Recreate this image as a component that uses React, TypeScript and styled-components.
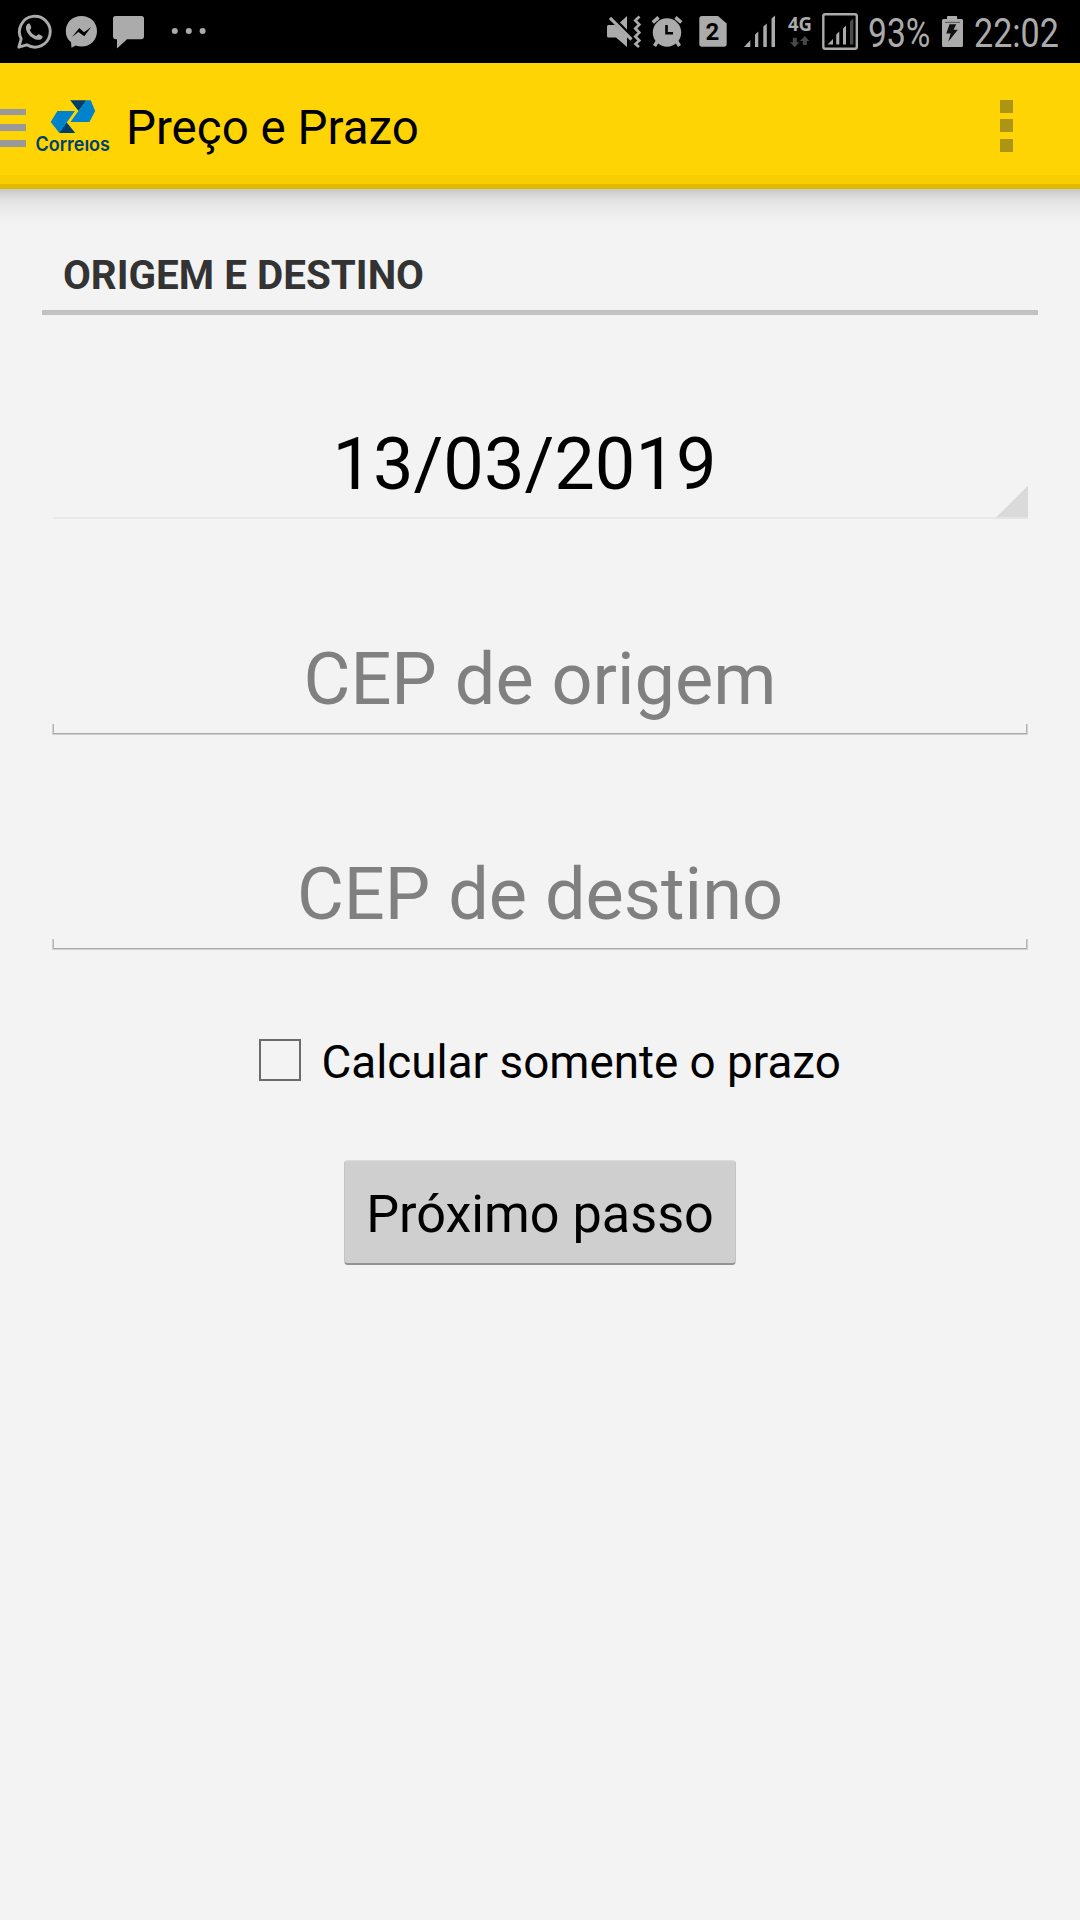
import React from "react";
import styled, { createGlobalStyle } from "styled-components";

const GlobalStyle = createGlobalStyle`
  * { box-sizing: border-box; }
  body { margin: 0; background: #f3f3f3; font-family: Roboto, "Liberation Sans", sans-serif; }
  svg { display: block; flex: none; overflow: visible; }
`;

const Screen = styled.div`
  width: 1080px;
  height: 1920px;
  display: flex;
  flex-direction: column;
  background: #f3f3f3;
  color: #000;
  overflow: hidden;
`;

const StatusBar = styled.header`
  height: 63px;
  flex: none;
  display: flex;
  justify-content: space-between;
  background: #000;
  color: #ababab;
`;

const StatusGroup = styled.div`
  display: flex;
`;

const StatusText = styled.div<{ $width: number; $scale: number; $gap: number }>`
  width: ${(p) => p.$width}px;
  margin-left: ${(p) => p.$gap}px;
  font-size: 40px;
  line-height: 67px;
  white-space: nowrap;
  transform: scaleX(${(p) => p.$scale});
  transform-origin: left center;
`;

const AppBar = styled.nav`
  height: 126px;
  flex: none;
  display: flex;
  align-items: flex-start;
  background: linear-gradient(#ffd405 112px, #f9ce00 112px, #f9ce00 121px, #dfb900 121px);
`;

const MenuIcon = styled.div`
  width: 26px;
  margin-top: 45.6px;
  display: flex;
  flex-direction: column;
  gap: 9px;
`;

const MenuLine = styled.span`
  height: 6.7px;
  background: #999;
`;

const LogoBox = styled.div`
  margin: 32px 0 0 7px;
`;

const Title = styled.h1`
  flex: 1;
  margin: 0 0 0 12px;
  font-size: 47.5px;
  font-weight: 400;
  line-height: 130px;
  white-space: nowrap;
`;

const Overflow = styled.button`
  margin: 37px 67px 0 0;
  padding: 0;
  border: 0;
  background: none;
  display: flex;
  flex-direction: column;
  gap: 6.4px;
`;

const OverflowDot = styled.span`
  width: 13px;
  height: 13px;
  background: #ad9415;
`;

const Shadow = styled.div`
  height: 37px;
  flex: none;
  background: linear-gradient(#c6c6c6, #d2d2d2 4px, #e2e2e2 11px, #ececec 22px, #f3f3f3);
`;

const Form = styled.main`
  padding: 0 42px;
  display: flex;
  flex-direction: column;
`;

const SectionTitle = styled.h2`
  height: 89px;
  margin: 0;
  padding: 26px 21px 0;
  border-bottom: 5px solid #c2c2c2;
  font-size: 40.4px;
  font-weight: 700;
  line-height: 48px;
  color: #333;
`;

const Spinner = styled.div`
  height: 110px;
  margin: 95px 10px 0 11px;
  display: flex;
  align-items: flex-end;
`;

const SpinnerValue = styled.div`
  flex: 1;
  height: 109px;
  margin-bottom: 1px;
  border-bottom: 2px solid #e8e8e8;
  font-size: 72.2px;
  line-height: 109px;
  text-align: center;
`;

const SpinnerCorner = styled.div`
  width: 32px;
  height: 33px;
  margin-bottom: 1px;
  border-bottom: 2px solid #e4e4e4;
  background: linear-gradient(135deg, transparent 50%, #dadada 50%);
`;

const Field = styled.div`
  height: 110px;
  margin: 105px 10px 0;
  font-size: 72.1px;
  line-height: 109px;
  text-align: center;
  color: #808080;
  display: flex;
  flex-direction: column;
`;

const Bracket = styled.span`
  height: 11px;
  margin-top: -10px;
  border: 1px solid #d0d0d0;
  border-top: 0;
  box-shadow: inset 1px 0 #b4b4b4, inset -1px 0 #b4b4b4, inset 0 -1px #a9a9a9;
`;

const CheckRow = styled.label`
  height: 60px;
  margin: 80px 0 0 217px;
  display: flex;
`;

const CheckBox = styled.span`
  width: 42px;
  height: 42px;
  margin-top: 9px;
  border: 2px solid #6a6a6a;
`;

const CheckLabel = styled.span`
  margin-left: 20.5px;
  font-size: 45.8px;
  line-height: 66px;
  white-space: nowrap;
`;

const NextButton = styled.button`
  align-self: center;
  width: 392px;
  height: 105px;
  margin-top: 70px;
  padding: 6px 0 0;
  border: 1px solid #c4c4c4;
  border-top-color: #dcdcdc;
  border-bottom: 2px solid #929292;
  border-radius: 4px;
  background: #cfcfcf;
  color: #000;
  font: 400 52.2px/96px Roboto, sans-serif;
`;

const LeftIcons = () => (
  <svg width="220" height="63" viewBox="0 0 220 63" fill="#ababab">
    <path d="M18.8 47.2 L21.2 38.8 A15.4 15.4 0 1 1 26.8 44.8 Z" fill="none" stroke="#ababab" strokeWidth="2.9" strokeLinejoin="round" />
    <path d="M27.2 24.2 C28.4 22.9 29.8 23.4 30.2 24.5 L31.2 27.2 C31.6 28.3 30.2 29.5 29.8 30.1 C30.9 33 33.3 35.1 36.2 36.1 C37.2 35.4 38 34 38.9 34.3 L42.2 36 C43.2 36.6 42.2 38.7 40.8 39.4 C36.6 41 31.7 37.9 29.2 35 C26.4 31.8 24.6 27.4 27.2 24.2 Z" />
    <path fillRule="evenodd" d="M81.4 16 C90.5 16 97 22.6 97 31.2 C97 39.8 90.5 46.6 81.4 46.6 C79.3 46.6 77.5 46.3 75.8 45.6 L71.5 47.8 L71 42.2 C67.5 39.5 65.8 35.6 65.8 31.2 C65.8 22.6 72.3 16 81.4 16 Z M72 37 L79.3 28 L84 32.2 L91.2 27 L84.3 36.3 L78.4 32.1 Z" />
    <path d="M115.5 16 H141.5 Q144 16 144 18.5 V36.8 Q144 39.2 141.5 39.2 H127 L117 48.5 V39.2 H115.5 Q113 39.2 113 36.8 V18.5 Q113 16 115.5 16 Z" />
    <circle cx="174.8" cy="31" r="3" />
    <circle cx="188.8" cy="31" r="3" />
    <circle cx="202.6" cy="31" r="3" />
  </svg>
);

const RightIcons = () => (
  <svg width="264" height="63" viewBox="598 0 264 63" fill="#ababab">
    <path d="M608.5 25 H615 L627 36 V47 L616 37.5 H608.5 Q607 37.5 607 36 V26.5 Q607 25 608.5 25 Z" />
    <path d="M620 22.5 L627 16 V29.5 Z" />
    <path d="M610 17.8 L631.5 39.5" stroke="#ababab" strokeWidth="3.2" />
    <path d="M639.5 16.5 L635.3 20.5 L639.3 24.5 L635.3 28.5 L639.3 32.5 L635.3 36.5 L639.3 40.5 L635.5 44 L639 47" fill="none" stroke="#ababab" strokeWidth="2.7" />
    <circle cx="667" cy="32.5" r="14.2" />
    <path d="M652.8 22.5 L658.5 17.3 M675.5 17.3 L681.3 22.5" stroke="#ababab" strokeWidth="3.6" />
    <path d="M657.5 41 L654.5 46 M676.5 41 L679.5 46" stroke="#ababab" strokeWidth="3.5" />
    <path d="M666.5 25 V33.3 H673" fill="none" stroke="#000" strokeWidth="2.6" />
    <path d="M702 16 H718 L726.7 23.5 V44 Q726.7 46.8 724 46.8 H702 Q699.3 46.8 699.3 44 V18.7 Q699.3 16 702 16 Z" />
    <text x="712.5" y="40.4" textAnchor="middle" fontFamily="Roboto, sans-serif" fontSize="24" fontWeight="700" fill="#000">2</text>
    <path d="M744 47 L750.3 40.3 V47 Z M755 34.5 L758.3 31.5 V47 H755 Z M763.3 26.5 L766.8 23.5 V47 H763.3 Z M771.5 18.5 L775 15.5 V47 H771.5 Z" />
    <text x="788" y="31.2" textLength="24" lengthAdjust="spacingAndGlyphs" fontFamily="Open Sans, sans-serif" fontSize="19" fontWeight="700">4G</text>
    <path d="M792.8 37.8 H796.8 V42.3 H799.3 L794.8 47.3 L790 42.3 H792.8 Z M802.8 45 H806.8 V41 H809.3 L804.8 36 L800 41 H802.8 Z" fill="#474747" />
    <rect x="823.3" y="14.3" width="33.5" height="34.5" rx="2" fill="none" stroke="#ababab" strokeWidth="2.4" />
    <path d="M827.5 44.5 L833 39 V44.5 Z M836.2 34.5 L839.3 31.5 V44.5 H836.2 Z M843 28.5 L846 25.5 V44.5 H843 Z" />
    <path d="M850 21.5 L853.3 18.5 V44.5 H850 Z" fill="#4b4b4b" />
  </svg>
);

const Battery = () => (
  <svg width="28" height="63" viewBox="939 0 28 63">
    <path fill="#ababab" d="M943.5 19 H947 V16.8 Q947 16 947.8 16 H956.4 Q957.2 16 957.2 16.8 V19 H961.5 Q963 19 963 20.5 V45.5 Q963 47 961.5 47 H943.5 Q942 47 942 45.5 V20.5 Q942 19 943.5 19 Z" />
    <path d="M945 22.4 H960" stroke="#555" strokeWidth="1" />
    <path fill="#101010" d="M949.5 24.3 H956.3 L953.5 29.7 H957.8 L948.3 41.8 L950.6 33.5 H946.3 Z" />
  </svg>
);

const Logo = () => (
  <svg width="81" height="68" viewBox="33 95 81 68" role="img">
    <path fill="#003f6b" d="M70.2 100.3 H86.5 L78.6 111 Z" />
    <path fill="#0083ca" d="M86.3 100.3 H90.7 L95.2 111 L89.4 122 H70.4 L78.6 110.8 Z" />
    <path fill="#003f6b" d="M66.5 122.3 L75.3 133 H59 Z" />
    <path fill="#0083ca" d="M57.4 111 H75 L66.7 122.4 L59.3 133 L50.7 122 Z" />
    <path stroke="#ffd405" strokeWidth="1.2" d="M76.3 110.5 L68.6 122.5" />
    <text x="35.4" y="150.7" textLength="74.6" lengthAdjust="spacingAndGlyphs" fontFamily="Inter, sans-serif" fontSize="19.4" fontWeight="600" fill="#00416b">Correıos</text>
  </svg>
);

export default function App() {
  return (
    <Screen>
      <GlobalStyle />
      <StatusBar>
        <StatusGroup>
          <LeftIcons />
        </StatusGroup>
        <StatusGroup>
          <RightIcons />
          <StatusText $width={71} $scale={0.84} $gap={6}>93%</StatusText>
          <Battery />
          <StatusText $width={106} $scale={0.852} $gap={7}>22:02</StatusText>
        </StatusGroup>
      </StatusBar>
      <AppBar>
        <MenuIcon>
          <MenuLine />
          <MenuLine />
          <MenuLine />
        </MenuIcon>
        <LogoBox>
          <Logo />
        </LogoBox>
        <Title>Preço e Prazo</Title>
        <Overflow aria-label="Mais opções">
          <OverflowDot />
          <OverflowDot />
          <OverflowDot />
        </Overflow>
      </AppBar>
      <Shadow />
      <Form>
        <SectionTitle>ORIGEM E DESTINO</SectionTitle>
        <Spinner>
          <SpinnerValue>13/03/2019</SpinnerValue>
          <SpinnerCorner />
        </Spinner>
        <Field>
          CEP de origem
          <Bracket />
        </Field>
        <Field>
          CEP de destino
          <Bracket />
        </Field>
        <CheckRow>
          <CheckBox />
          <CheckLabel>Calcular somente o prazo</CheckLabel>
        </CheckRow>
        <NextButton>Próximo passo</NextButton>
      </Form>
    </Screen>
  );
}
